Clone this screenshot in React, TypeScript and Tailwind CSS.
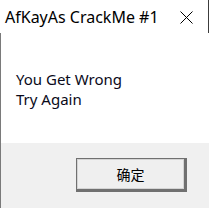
import React from "react";

export default function App() {
  return (
    <div
      className="w-[209px] h-[208px] flex flex-col bg-white overflow-hidden"
      style={{ fontFamily: '"Noto Sans", "Noto Sans CJK SC", sans-serif' }}
    >
      <div className="h-[33px] flex items-center justify-between border-r border-[#3c3c3c] bg-white shrink-0">
        <span className="pl-[5px] text-[16px] leading-none text-black">AfKayAs CrackMe #1</span>
        <svg width="13" height="13" viewBox="0 0 13 13" className="mr-[15px] mt-[1px]">
          <path d="M0.5 0.5 L12.5 12.5 M12.5 0.5 L0.5 12.5" stroke="#000" strokeWidth="1" fill="none" />
        </svg>
      </div>
      <div className="h-[110px] border-l border-[#7a7a7a] bg-white pl-[15px] pt-[36px] shrink-0">
        <div className="text-[15px] leading-[20px] text-[#0a0a1a]">You Get Wrong</div>
        <div className="text-[15px] leading-[20px] text-[#0a0a1a]">Try Again</div>
      </div>
      <div className="flex-1 border-l border-[#7a7a7a] bg-[#f0f0f0] pl-[75px] pt-[15px]">
        <div className="w-[111px] h-[34px] border-t border-l border-r-[3px] border-b-[3px] border-[#707070] bg-[#e9e9e9]">
          <div className="w-full h-full border border-[#d4d4d4] bg-[#efefef] flex items-center justify-center">
            <span className="text-[14px] leading-none text-black" style={{ fontFamily: '"Noto Sans CJK SC", sans-serif' }}>确定</span>
          </div>
        </div>
      </div>
    </div>
  );
}
